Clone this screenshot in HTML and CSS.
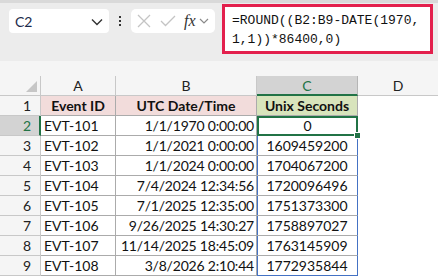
FILE: index.html
```html
<!DOCTYPE html>
<html lang="en">
<head>
  <meta charset="UTF-8">
  <title>Unix Seconds</title>
  <link rel="stylesheet" href="styles.css">
</head>
<body>
  <div class="toolbar">
    <div class="name-box">
      <span class="name-text">C2</span>
      <svg class="chev" width="12" height="8" viewBox="0 0 12 8"><path d="M1 1.5 L6 6.5 L11 1.5" fill="none" stroke="#333" stroke-width="1.4"/></svg>
    </div>
    <div class="dots"><span></span><span></span><span></span></div>
    <div class="fx-box">
      <svg width="14" height="14" viewBox="0 0 14 14"><path d="M1 1 L13 13 M13 1 L1 13" stroke="#c4c4c4" stroke-width="1.3" fill="none"/></svg>
      <svg width="16" height="12" viewBox="0 0 16 12"><path d="M1 6 L5.5 10.5 L15 1" stroke="#c4c4c4" stroke-width="1.3" fill="none"/></svg>
      <span class="fx">fx</span>
      <svg width="10" height="7" viewBox="0 0 10 7"><path d="M1 1 L5 5 L9 1" fill="none" stroke="#8a8a8a" stroke-width="1.2"/></svg>
    </div>
    <div class="formula">=ROUND((B2:B9-DATE(1970,<br>1,1))*86400,0)</div>
  </div>
  <div class="gap"></div>
  <div class="sheet">
    <div class="cell corner"><span class="tri"></span></div>
    <div class="cell col-head">A</div>
    <div class="cell col-head">B</div>
    <div class="cell col-head sel">C</div>
    <div class="cell col-head last">D</div>

    <div class="cell row-head">1</div>
    <div class="cell title pink">Event ID</div>
    <div class="cell title pink">UTC Date/Time</div>
    <div class="cell title green">Unix Seconds</div>
    <div class="cell empty"></div>

    <div class="cell row-head sel">2</div>
    <div class="cell txt">EVT-101</div>
    <div class="cell num">1/1/1970 0:00:00</div>
    <div class="cell res active">0<span class="handle"></span></div>
    <div class="cell empty"></div>

    <div class="cell row-head">3</div>
    <div class="cell txt">EVT-102</div>
    <div class="cell num">1/1/2021 0:00:00</div>
    <div class="cell res">1609459200</div>
    <div class="cell empty"></div>

    <div class="cell row-head">4</div>
    <div class="cell txt">EVT-103</div>
    <div class="cell num">1/1/2024 0:00:00</div>
    <div class="cell res">1704067200</div>
    <div class="cell empty"></div>

    <div class="cell row-head">5</div>
    <div class="cell txt">EVT-104</div>
    <div class="cell num">7/4/2024 12:34:56</div>
    <div class="cell res">1720096496</div>
    <div class="cell empty"></div>

    <div class="cell row-head">6</div>
    <div class="cell txt">EVT-105</div>
    <div class="cell num">7/1/2025 12:35:00</div>
    <div class="cell res">1751373300</div>
    <div class="cell empty"></div>

    <div class="cell row-head">7</div>
    <div class="cell txt">EVT-106</div>
    <div class="cell num">9/26/2025 14:30:27</div>
    <div class="cell res">1758897027</div>
    <div class="cell empty"></div>

    <div class="cell row-head">8</div>
    <div class="cell txt">EVT-107</div>
    <div class="cell num">11/14/2025 18:45:09</div>
    <div class="cell res">1763145909</div>
    <div class="cell empty"></div>

    <div class="cell row-head">9</div>
    <div class="cell txt">EVT-108</div>
    <div class="cell num">3/8/2026 2:10:44</div>
    <div class="cell res bottom">1772935844</div>
    <div class="cell empty"></div>
  </div>
</body>
</html>
```

FILE: styles.css
```css
body {
  margin: 0;
  font-family: Lato, "Liberation Sans", sans-serif;
  background: #fff;
  overflow: hidden;
}
.toolbar {
  height: 58px;
  border-top: 3px solid #d9d9d9;
  background: #ececec;
  display: flex;
  align-items: flex-start;
}
.name-box {
  margin: 6px 0 0 9px;
  width: 100px;
  height: 24px;
  background: #fff;
  border-radius: 4px;
  box-sizing: border-box;
  display: flex;
  align-items: center;
  justify-content: space-between;
  padding: 0 6px 0 6px;
}
.name-text {
  font-size: 14px;
  color: #1b2a4a;
}
.chev {
  margin-top: 1px;
}
.dots {
  width: 22px;
  height: 24px;
  margin-top: 6px;
  display: flex;
  flex-direction: column;
  align-items: center;
  justify-content: center;
  gap: 2px;
}
.dots span {
  width: 2px;
  height: 2px;
  background: #333;
}
.fx-box {
  margin-top: 6px;
  width: 84px;
  height: 24px;
  background: #fff;
  border-radius: 5px;
  box-sizing: border-box;
  display: flex;
  align-items: center;
  gap: 9px;
  padding: 0 0 0 6px;
}
.fx {
  font-family: "Liberation Serif", serif;
  font-style: italic;
  font-size: 16px;
  color: #333;
  margin-left: -1px;
  margin-right: -6px;
}
.formula {
  margin: 1px 0 0 7px;
  width: 211px;
  height: 50px;
  box-sizing: border-box;
  border: 3px solid #e3204d;
  background: #fff;
  font-family: "Liberation Mono", monospace;
  font-size: 13px;
  line-height: 19px;
  padding: 4px 0 0 7px;
  color: #111;
}
.gap {
  height: 15px;
  background: #f5f5f5;
}
.sheet {
  display: grid;
  grid-template-columns: 41px 75px 141px 101px 1fr;
  grid-template-rows: 20px repeat(9, 20px);
  background: #fff;
}
.cell {
  box-sizing: border-box;
  border-right: 1px solid #ababab;
  border-bottom: 1px solid #ababab;
  font-size: 14px;
  line-height: 20px;
  color: #111;
  white-space: nowrap;
  overflow: hidden;
  position: relative;
}
.corner {
  background: #f5f5f5;
  border-color: #c8c8c8;
}
.tri {
  position: absolute;
  right: 3px;
  bottom: 3px;
  width: 0;
  height: 0;
  border-left: 11px solid transparent;
  border-bottom: 11px solid #c6c6c6;
}
.col-head {
  background: #f5f5f5;
  border-color: #c8c8c8;
  text-align: center;
  color: #222;
}
.col-head.sel {
  background: #d3d3d3;
  color: #217346;
  border-bottom: 2px solid #217346;
  border-right-color: #b5b5b5;
}
.col-head.last {
  border-right: none;
}
.row-head {
  background: #f5f5f5;
  border-color: #c8c8c8;
  text-align: right;
  padding-right: 9px;
  color: #222;
}
.row-head.sel {
  background: #d3d3d3;
  color: #217346;
  border-right: 2px solid #217346;
  padding-right: 8px;
}
.title {
  font-weight: bold;
  text-align: center;
}
.pink {
  background: #f2dcdb;
}
.green {
  background: #d8e4bc;
}
.txt {
  padding-left: 3px;
}
.num {
  text-align: right;
  padding-right: 2px;
  letter-spacing: -0.2px;
}
.res {
  text-align: center;
  border-right-color: #4472c4;
  box-shadow: inset 1px 0 0 #4472c4;
}
.res.bottom {
  border-bottom-color: #4472c4;
}
.active {
  border: none;
  box-shadow: inset 0 0 0 2px #217346;
  overflow: visible;
}
.handle {
  position: absolute;
  right: -3px;
  bottom: -3px;
  width: 5px;
  height: 5px;
  background: #217346;
  border: 1px solid #fff;
  z-index: 2;
}
.empty {
  border: none;
}
```
